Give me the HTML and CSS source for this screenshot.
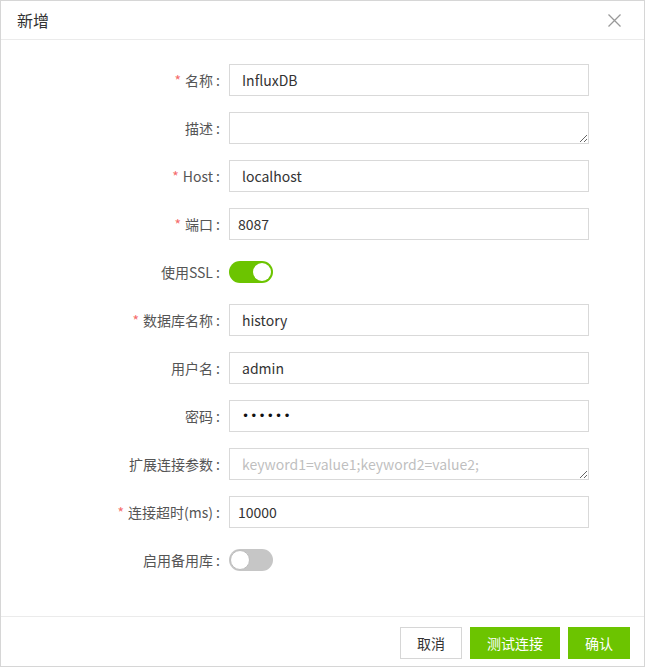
FILE: index.html
```html
<!DOCTYPE html>
<html>
<head>
<meta charset="utf-8">
<link rel="stylesheet" href="styles.css">
</head>
<body>
<div class="dialog">
  <div class="header">
    <span class="title">新增</span>
    <svg class="close" width="13" height="13" viewBox="0 0 13 13"><path d="M0.5 0.5L12.5 12.5M12.5 0.5L0.5 12.5" stroke="#999" stroke-width="1.3" fill="none"/></svg>
  </div>
  <div class="body">
    <div class="row"><label class="lbl"><span class="req">*</span>名称 :</label><input class="inp" value="InfluxDB"></div>
    <div class="row"><label class="lbl">描述 :</label><textarea class="inp ta"></textarea></div>
    <div class="row"><label class="lbl"><span class="req">*</span>Host :</label><input class="inp" value="localhost"></div>
    <div class="row"><label class="lbl"><span class="req">*</span>端口 :</label><input class="inp narrow" value="8087"></div>
    <div class="row"><label class="lbl">使用SSL :</label><div class="switch on"><span class="knob"></span></div></div>
    <div class="row"><label class="lbl"><span class="req">*</span>数据库名称 :</label><input class="inp" value="history"></div>
    <div class="row"><label class="lbl">用户名 :</label><input class="inp" value="admin"></div>
    <div class="row"><label class="lbl">密码 :</label><input class="inp pwd" type="password" value="123456"></div>
    <div class="row"><label class="lbl">扩展连接参数 :</label><textarea class="inp ta" placeholder="keyword1=value1;keyword2=value2;"></textarea></div>
    <div class="row"><label class="lbl"><span class="req">*</span>连接超时(ms) :</label><input class="inp narrow" value="10000"></div>
    <div class="row"><label class="lbl">启用备用库 :</label><div class="switch off"><span class="knob"></span></div></div>
  </div>
  <div class="footer">
    <button class="btn plain">取消</button>
    <button class="btn primary wide">测试连接</button>
    <button class="btn primary">确认</button>
  </div>
</div>
</body>
</html>
```

FILE: styles.css
```css
* { box-sizing: border-box; }
html, body { margin: 0; padding: 0; background: #fff; }
body { font-family: "Noto Sans CJK SC", "Noto Sans", sans-serif; }
.dialog {
  width: 645px;
  height: 667px;
  border: 1px solid #d6d6d6;
  display: flex;
  flex-direction: column;
  background: #fff;
}
.header {
  height: 39px;
  border-bottom: 1px solid #ebebeb;
  display: flex;
  align-items: center;
  justify-content: space-between;
  padding: 0 23px 0 16px;
}
.title { font-size: 16px; color: #333; line-height: 20px; }
.close { display: block; margin-top: 1px; }
.body {
  flex: 1;
  padding-top: 24px;
  display: flex;
  flex-direction: column;
  gap: 16px;
}
.row { display: flex; align-items: center; height: 32px; }
.lbl {
  width: 228px;
  padding-right: 9px;
  text-align: right;
  font-size: 14px;
  color: #555;
  line-height: 20px;
}
.req { color: #f56c6c; margin-right: 4px; }
.inp {
  width: 360px;
  height: 32px;
  border: 1px solid #d9d9d9;
  border-radius: 0;
  padding: 0 12px;
  font-family: "Noto Sans CJK SC", "Noto Sans", sans-serif;
  font-size: 14px;
  color: #333;
  outline: none;
  margin: 0;
  background: #fff;
}
.inp.narrow { padding-left: 8px; }
.ta {
  resize: vertical;
  padding-top: 5px;
  line-height: 20px;
  display: block;
}
.ta::placeholder { color: #bfbfbf; }
.pwd { letter-spacing: 1.2px; font-size: 12px; font-family: "DejaVu Sans", sans-serif; color: #111; }
.switch {
  width: 44px;
  height: 22px;
  border-radius: 11px;
  position: relative;
}
.switch.on { background: #6cc400; }
.switch.off { background: #c6c6c6; }
.knob {
  position: absolute;
  top: 2px;
  width: 18px;
  height: 18px;
  border-radius: 50%;
  background: #fff;
}
.switch.on .knob { right: 2px; }
.switch.off .knob { left: 1px; top: 1px; width: 20px; height: 20px; border: 1px solid #bdbdbd; }
.footer {
  height: 50px;
  border-top: 1px solid #ebebeb;
  display: flex;
  align-items: center;
  justify-content: flex-end;
  gap: 8px;
  padding-right: 14px;
  padding-top: 2px;
}
.btn {
  height: 32px;
  width: 62px;
  font-family: "Noto Sans CJK SC", "Noto Sans", sans-serif;
  font-size: 14px;
  border-radius: 0;
  cursor: pointer;
  padding: 0;
}
.btn.wide { width: 90px; }
.plain { background: #fff; border: 1px solid #d6d6d6; color: #333; }
.primary { background: #6cc400; border: 1px solid #6cc400; color: #fff; }
```
